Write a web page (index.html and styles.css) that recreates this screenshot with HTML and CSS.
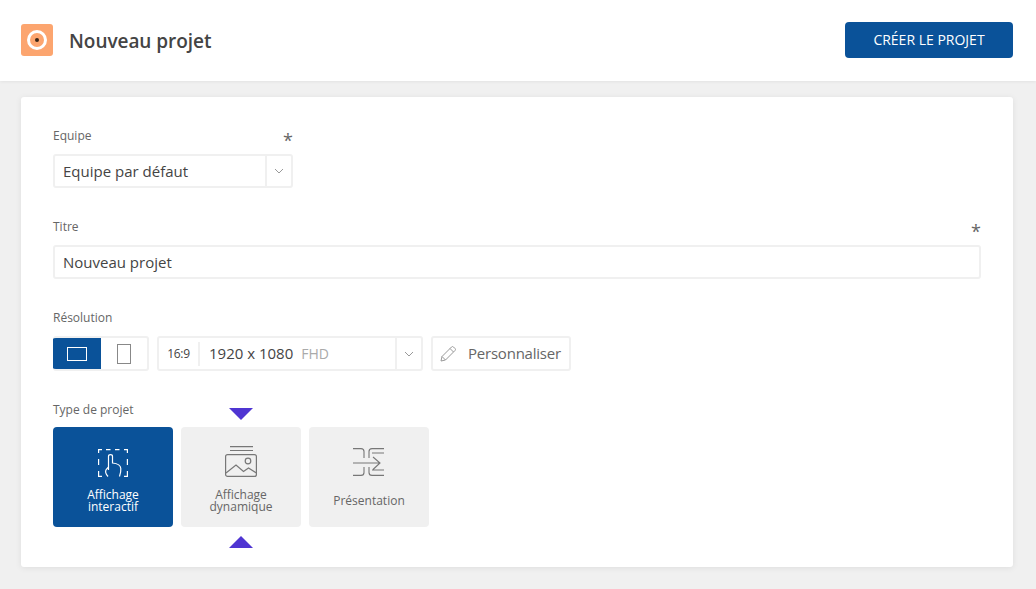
FILE: index.html
```html
<!DOCTYPE html>
<html lang="fr">
<head>
<meta charset="utf-8">
<title>Nouveau projet</title>
<link rel="stylesheet" href="styles.css">
</head>
<body>
<header class="topbar">
  <div class="brand">
    <svg class="logo" width="32" height="32" viewBox="0 0 32 32"><rect width="32" height="32" rx="3" fill="#fca56f"/><circle cx="16" cy="16" r="8.500" fill="none" stroke="#fff" stroke-width="3"/><circle cx="16" cy="16" r="2" fill="#3a2415"/></svg>
    <h1 class="title">Nouveau projet</h1>
  </div>
  <button class="create">CRÉER LE PROJET</button>
</header>
<main class="card">
  <section class="field team">
    <div class="label-row"><span class="label">Equipe</span><span class="req">*</span></div>
    <div class="box select-team"><span class="value">Equipe par défaut</span><span class="caret"><svg width="10" height="6" viewBox="0 0 10 6"><path d="M1 1l4 4 4-4" fill="none" stroke="#999" stroke-width="1"/></svg></span></div>
  </section>
  <section class="field name">
    <div class="label-row"><span class="label">Titre</span><span class="req">*</span></div>
    <div class="box input-title"><span class="value">Nouveau projet</span></div>
  </section>
  <section class="field res">
    <div class="label-row"><span class="label">Résolution</span></div>
    <div class="res-row">
      <div class="box orient">
        <span class="o-btn on"><svg width="20" height="14" viewBox="0 0 20 14"><rect x=".5" y=".5" width="19" height="13" fill="none" stroke="#fff"/></svg></span>
        <span class="o-btn"><svg width="14" height="20" viewBox="0 0 14 20"><rect x=".5" y=".5" width="13" height="19" fill="none" stroke="#888"/></svg></span>
      </div>
      <div class="box select-res">
        <span class="ratio">16:9</span>
        <span class="res-value">1920 x 1080<span class="fhd">FHD</span></span>
        <span class="caret"><svg width="10" height="6" viewBox="0 0 10 6"><path d="M1 1l4 4 4-4" fill="none" stroke="#999" stroke-width="1"/></svg></span>
      </div>
      <div class="box custom">
        <svg width="16" height="16" viewBox="0 0 16 16"><path d="M1 15l1-4.500L11.500 1q1-1 2 0l1.500 1.500q1 1 0 2L5.500 14zM2 10.500L5.500 14M10 2.500L13.500 6" fill="none" stroke="#999" stroke-width="1"/></svg>
        <span class="custom-text">Personnaliser</span>
      </div>
    </div>
  </section>
  <section class="field type">
    <div class="label-row type-label"><span class="label">Type de projet</span></div>
    <div class="tiles">
      <div class="tile on">
        <svg class="icon-hand" width="30" height="28" viewBox="0 0 30 28" fill="none" stroke="#fff" stroke-width="1.200"><path d="M.6 4V.6H4M8 .6h4.500M17 .6h4.500M26 .6h3.400V4M.6 10v6M29.400 10v6M.6 22v5.400H4M29.400 22v5.400H26"/><path d="M10.500 21V7.500q0-1.800 2-1.800t2 1.800V14q8 .8 8.300 5.500.3 3.500-1.300 8M10.500 18l-2.300 2.500q-1.800 3 1.800 7"/></svg>
        <span class="t-text">Affichage<br>interactif</span>
      </div>
      <div class="tile">
        <span class="arrow down"></span>
        <svg class="icon-image" width="32" height="31" viewBox="0 0 32 31" fill="none" stroke="#777" stroke-width="1.200"><path d="M5 .6h23M5 4.500h23"/><rect x=".6" y="8.600" width="30.800" height="21.800" rx="2"/><circle cx="23" cy="15" r="2.800"/><path d="M1 27l10-8 7.500 6.500 5-3.500 8 5"/></svg>
        <span class="t-text">Affichage<br>dynamique</span>
        <span class="arrow up"></span>
      </div>
      <div class="tile">
        <svg class="icon-pres" width="32" height="28" viewBox="0 0 32 28" fill="none" stroke="#777" stroke-width="1.100"><path d="M0 .6h8q3 0 3 3V10M16 10V3.600q0-3 3-3h12M19 5h12M0 15h27M20 9l7 6-7 6.500M19 22h12M0 27.400h8q3 0 3-3V19M16 19v5.400q0 3 3 3h12"/></svg>
        <span class="t-text">Présentation</span>
      </div>
    </div>
  </section>
</main>
</body>
</html>
```
FILE: styles.css
```css
* { box-sizing: border-box; }
html, body { margin: 0; height: 100%; }
body {
  background: #f0f0f0;
  font-family: "Open Sans", "Noto Sans", sans-serif;
  color: #444;
  height: 589px;
  overflow: hidden;
}
.topbar {
  height: 81px;
  background: #fff;
  display: flex;
  align-items: center;
  justify-content: space-between;
  padding: 0 23px 0 21px;
  box-shadow: 0 1px 3px rgba(0,0,0,.06);
}
.brand { display: flex; align-items: center; gap: 16px; }
.logo { display: block; margin-top: -2px; }
.title { margin: 0; font-size: 19px; font-weight: 600; color: #444; letter-spacing: -.05px; }
.create {
  width: 168px;
  height: 36px;
  border: 0;
  border-radius: 4px;
  background: #0a5299;
  color: #fff;
  font: 400 14px "Open Sans", sans-serif;
  margin-top: -1px;
  padding: 0 0 2px;
}
.card {
  margin: 16px 23px 0 21px;
  height: 470px;
  background: #fff;
  border-radius: 3px;
  box-shadow: 0 1px 6px rgba(0,0,0,.08);
  padding: 28px 32px 0;
}
.label-row {
  display: flex;
  justify-content: space-between;
  height: 29px;
  padding-top: 2px;
}
.label { font-size: 12px; line-height: 17px; color: #666; }
.req { font-size: 18px; line-height: 26px; color: #666; }
.team .label-row { width: 240px; }
.box {
  background: #fff;
  border: 2px solid #f0f0f0;
  border-radius: 3px;
  display: flex;
  align-items: center;
}
.select-team { width: 240px; height: 34px; }
.value { flex: 1; padding-left: 8px; font-size: 15px; color: #444; }
.caret {
  width: 26px;
  height: 100%;
  border-left: 2px solid #f0f0f0;
  display: flex;
  align-items: center;
  justify-content: center;
  flex: none;
}
.name { margin-top: 28px; }
.input-title { width: 928px; height: 34px; }
.res { margin-top: 28px; }
.res-row { display: flex; gap: 8px; }
.res-row .box { height: 35px; }
.orient { width: 96px; overflow: hidden; border-left: 0; }
.o-btn { flex: 1; height: 100%; display: flex; align-items: center; justify-content: center; }
.o-btn svg { display: block; }
.o-btn.on { background: #0a5299; margin: -2px 0; height: 35px; flex: 0 0 48px; }
.select-res { width: 266px; }
.ratio {
  width: 41px;
  flex: none;
  text-align: center;
  font-size: 12px;
  letter-spacing: -.3px;
  line-height: 24px;
  border-right: 2px solid #f0f0f0;
  color: #444;
}
.res-value { flex: 1; padding: 0 0 2px 9px; font-size: 15px; color: #444; }
.fhd { margin-left: 8px; font-size: 14px; color: #aaa; }
.custom { width: 140px; padding-left: 7px; gap: 12px; font-size: 15px; color: #666; }
.custom svg { flex: none; }
.custom-text { padding-bottom: 2px; letter-spacing: -.22px; }
.type { margin-top: 30px; }
.type-label { height: 26px; padding-top: 0; }
.tiles { display: flex; gap: 8px; }
.tile {
  position: relative;
  width: 120px;
  height: 100px;
  border-radius: 4px;
  background: #f0f0f0;
  display: flex;
  flex-direction: column;
  align-items: center;
  padding-top: 19px;
  color: #666;
}
.tile.on { background: #0a5299; color: #fff; }
.tile > svg { display: block; flex: none; }
.icon-hand { margin-top: 3px; }
.icon-pres { margin-top: 2px; }
.t-text {
  font-size: 12px;
  line-height: 12px;
  text-align: center;
  flex: 1;
}
.icon-hand + .t-text { margin-top: 12px; }
.icon-image + .t-text { margin-top: 12px; }
.icon-pres + .t-text { margin-top: 19px; }
.arrow {
  position: absolute;
  left: 48px;
  width: 0;
  height: 0;
  border-left: 12px solid transparent;
  border-right: 12px solid transparent;
}
.arrow.down { top: -19px; border-top: 12px solid #4f35d2; }
.arrow.up { bottom: -21px; border-bottom: 12px solid #4f35d2; }
```
